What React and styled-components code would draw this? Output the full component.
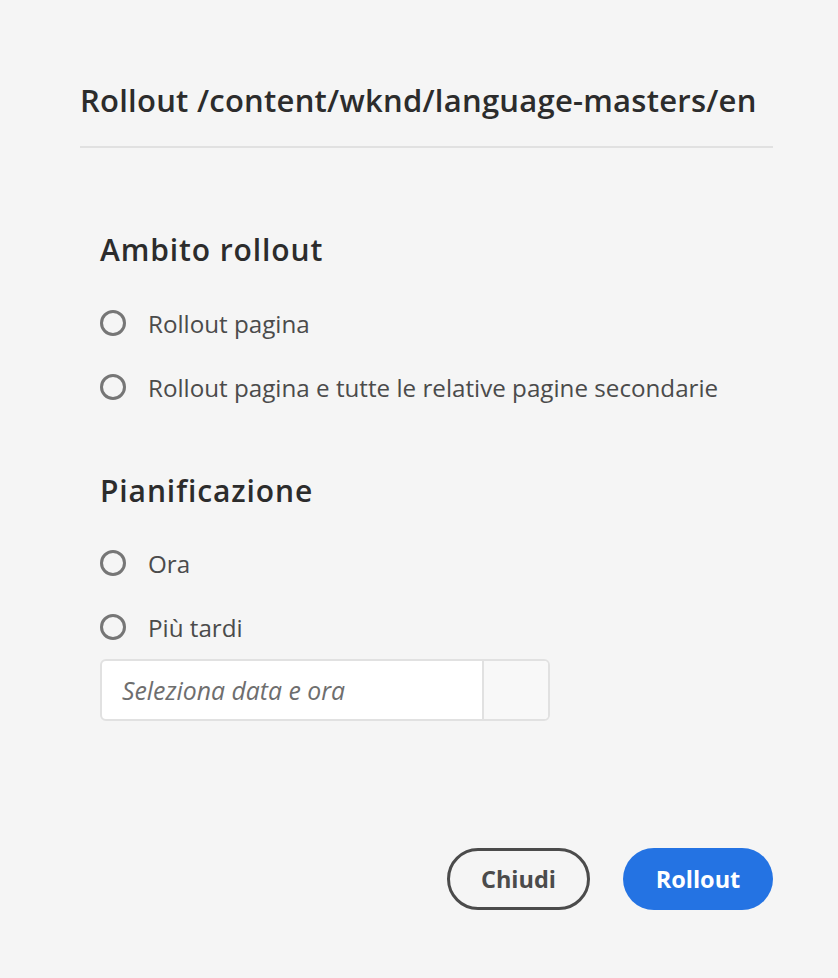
import React from "react";
import styled, { createGlobalStyle } from "styled-components";

const Global = createGlobalStyle`
  html, body { margin: 0; padding: 0; background: #f5f5f5; }
  body { font-family: "Open Sans", "Noto Sans", sans-serif; }
`;

const Dialog = styled.div`
  box-sizing: border-box;
  width: 838px;
  height: 978px;
  padding: 77px 65px 0 80px;
  display: flex;
  flex-direction: column;
`;

const Title = styled.h1`
  margin: 0;
  font-size: 31px;
  font-weight: 600;
  letter-spacing: 0.25px;
  color: #2c2c2c;
  line-height: 46px;
`;

const Divider = styled.hr`
  border: none;
  height: 2px;
  background: #e1e1e1;
  margin: 23px 0 0 0;
`;

const Body = styled.div`
  padding: 0 0 0 20px;
  display: flex;
  flex-direction: column;
`;

const SectionTitle = styled.h2`
  margin: ${(p) => p.$top}px 0 0 0;
  font-size: 30px;
  font-weight: 600;
  letter-spacing: 0.9px;
  color: #2c2c2c;
  line-height: 40px;
`;

const RadioRow = styled.label`
  display: flex;
  align-items: center;
  gap: 22px;
  height: 64px;
  font-size: 24.2px;
  color: #4b4b4b;
`;

const RadioCircle = styled.span`
  box-sizing: border-box;
  width: 26px;
  height: 26px;
  border-radius: 50%;
  border: 3px solid #767676;
  flex: none;
`;

const RadioList = styled.div`
  display: flex;
  flex-direction: column;
  margin-top: ${(p) => p.$top}px;
`;

const DateField = styled.div`
  display: flex;
  width: 450px;
  height: 62px;
  box-sizing: border-box;
  border: 2px solid #e1e1e1;
  border-radius: 6px;
  background: #ffffff;
  overflow: hidden;
`;

const DateInput = styled.div`
  flex: 1;
  display: flex;
  align-items: center;
  padding-left: 20px;
  font-size: 24.8px;
  font-style: italic;
  color: #6e6e6e;
  border-right: 2px solid #e1e1e1;
`;

const DateButton = styled.div`
  width: 64px;
  background: #f8f8f8;
`;

const Footer = styled.div`
  display: flex;
  justify-content: flex-end;
  gap: 33px;
  margin-top: auto;
  margin-bottom: 68px;
`;

const Button = styled.button`
  box-sizing: border-box;
  height: 62px;
  padding: 0 28px;
  border-radius: 31px;
  font-family: inherit;
  font-size: 23.5px;
  font-weight: 700;
  ${(p) =>
    p.$primary
      ? `background: #2473e3; color: #ffffff; border: none; min-width: 150px;`
      : `background: transparent; color: #4b4b4b; border: 3px solid #4b4b4b; min-width: 143px;`}
`;

const Radio = ({ children }) => (
  <RadioRow>
    <RadioCircle />
    {children}
  </RadioRow>
);

export default function App() {
  return (
    <>
      <Global />
      <Dialog>
        <Title>Rollout /content/wknd/language-masters/en</Title>
        <Divider />
        <Body>
          <SectionTitle $top={82}>Ambito rollout</SectionTitle>
          <RadioList $top={21}>
            <Radio>Rollout pagina</Radio>
            <Radio>Rollout pagina e tutte le relative pagine secondarie</Radio>
          </RadioList>
          <SectionTitle $top={52}>Pianificazione</SectionTitle>
          <RadioList $top={20}>
            <Radio>Ora</Radio>
            <Radio>Più tardi</Radio>
          </RadioList>
          <DateField>
            <DateInput>Seleziona data e ora</DateInput>
            <DateButton />
          </DateField>
        </Body>
        <Footer>
          <Button>Chiudi</Button>
          <Button $primary>Rollout</Button>
        </Footer>
      </Dialog>
    </>
  );
}
